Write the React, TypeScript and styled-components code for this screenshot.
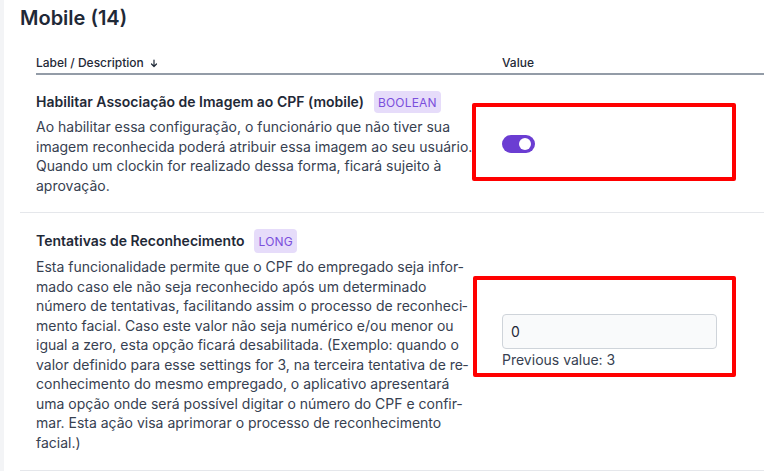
import React from "react";
import styled, { createGlobalStyle } from "styled-components";

const Global = createGlobalStyle`
  html, body { margin: 0; padding: 0; }
  body {
    background: #f3f4f6;
    font-family: Inter, "Noto Sans", sans-serif;
    color: #1f2937;
    overflow: hidden;
  }
`;

const Panel = styled.main`
  margin-left: 4px;
  background: #ffffff;
  min-height: 471px;
  padding: 6px 0 0 16px;
  box-sizing: border-box;
`;

const Title = styled.h2`
  margin: 0;
  font-size: 20px;
  line-height: 24px;
  font-weight: 600;
  color: #1f2937;
`;

const Table = styled.div`
  margin-top: 25px;
  width: 760px;
`;

const HeaderRow = styled.div`
  display: grid;
  grid-template-columns: 452px 1fr;
  margin-left: 16px;
  border-bottom: 2px solid #939ca7;
  padding-bottom: 2px;
`;

const HeaderCell = styled.div<{ $pad?: number }>`
  display: flex;
  align-items: center;
  gap: 6px;
  padding-left: ${(p) => p.$pad ?? 0}px;
  font-size: 12px;
  line-height: 16px;
  font-weight: 500;
  color: #1f2937;
`;

const Row = styled.div`
  display: grid;
  grid-template-columns: 452px 1fr;
  border-bottom: 1px solid #e5e7eb;
`;

const LabelCell = styled.div<{ $top: number; $bottom: number }>`
  padding: ${(p) => p.$top}px 0 ${(p) => p.$bottom}px 16px;
`;

const LabelLine = styled.div`
  display: flex;
  align-items: center;
  gap: 10px;
`;

const LabelText = styled.span`
  font-size: 14px;
  line-height: 22px;
  font-weight: 600;
  color: #1f2937;
`;

const Badge = styled.span<{ $h: number }>`
  display: inline-flex;
  align-items: center;
  height: ${(p) => p.$h}px;
  padding: 0 4px;
  border-radius: 4px;
  background: #e6dcfa;
  color: #7b4fdc;
  font-size: 12px;
  font-weight: 400;
  letter-spacing: 0.2px;
`;

const Description = styled.p`
  width: 440px;
  margin: 4px 0 0 0;
  font-size: 14px;
  line-height: 19.5px;
  color: #374151;
  hyphens: manual;
`;

const ValueCell = styled.div`
  display: flex;
  align-items: center;
  padding-left: 30px;
`;

const ValueContent = styled.div`
  position: relative;
  display: flex;
  flex-direction: column;
`;

const RedMark = styled.div<{ $x: number; $y: number; $w: number; $h: number }>`
  position: absolute;
  left: ${(p) => p.$x}px;
  top: ${(p) => p.$y}px;
  width: ${(p) => p.$w}px;
  height: ${(p) => p.$h}px;
  box-sizing: border-box;
  border: 4px solid #ff0000;
  border-radius: 2px;
  pointer-events: none;
`;

const Toggle = styled.span`
  position: relative;
  display: inline-block;
  width: 33px;
  height: 18px;
  border-radius: 9px;
  background: #6b3dd2;
  &::after {
    content: "";
    position: absolute;
    top: 3px;
    right: 4px;
    width: 12px;
    height: 12px;
    border-radius: 50%;
    background: #ffffff;
  }
`;

const Input = styled.input`
  box-sizing: border-box;
  width: 215px;
  height: 35px;
  margin: 0;
  padding: 0 8px;
  border: 1px solid #cfd4da;
  border-radius: 4px;
  background: #f9fafb;
  font-family: Inter, "Noto Sans", sans-serif;
  font-size: 14px;
  color: #1f2937;
  outline: none;
`;

const Hint = styled.div`
  margin-top: 1px;
  font-size: 14px;
  line-height: 20px;
  color: #374151;
`;

const SortArrow = () => (
  <svg width="8" height="9" viewBox="0 0 8 9" aria-hidden="true">
    <path d="M4 1v6.5M1.5 5L4 7.5 6.5 5" fill="none" stroke="#1f2937" strokeWidth="1.2" strokeLinecap="round" strokeLinejoin="round" />
  </svg>
);

const S = "\u00AD";

export default function App() {
  return (
    <>
      <Global />
      <Panel>
        <Title>Mobile (14)</Title>
        <Table>
          <HeaderRow>
            <HeaderCell>
              Label / Description <SortArrow />
            </HeaderCell>
            <HeaderCell $pad={14}>Value</HeaderCell>
          </HeaderRow>
          <Row>
            <LabelCell $top={16} $bottom={17}>
              <LabelLine>
                <LabelText>Habilitar Associação de Imagem ao CPF (mobile)</LabelText>
                <Badge $h={22}>BOOLEAN</Badge>
              </LabelLine>
              <Description>
                Ao habilitar essa configuração, o funcionário que não tiver sua imagem reconhecida poderá atribuir essa imagem ao seu usuário. Quando um clockin for realizado dessa forma, ficará sujeito à aprovação.
              </Description>
            </LabelCell>
            <ValueCell>
              <ValueContent>
                <Toggle />
                <RedMark $x={-30} $y={-32} $w={264} $h={78} />
              </ValueContent>
            </ValueCell>
          </Row>
          <Row>
            <LabelCell $top={16} $bottom={18}>
              <LabelLine>
                <LabelText>Tentativas de Reconhecimento</LabelText>
                <Badge $h={24}>LONG</Badge>
              </LabelLine>
              <Description>
                {`Esta funcionalidade permite que o CPF do empregado seja infor${S}mado caso ele não seja reconhecido após um determinado número de tentativas, facilitando assim o processo de reconheci${S}mento facial. Caso este valor não seja numérico e/ou menor ou igual a zero, esta opção ficará desabilitada. (Exemplo: quando o valor definido para esse settings for 3, na terceira tentativa de re${S}conhecimento do mesmo empregado, o aplicativo apresentará uma opção onde será possível digitar o número do CPF e confir${S}mar. Esta ação visa aprimorar o processo de reconhecimento facial.)`}
              </Description>
            </LabelCell>
            <ValueCell>
              <ValueContent>
                <Input defaultValue="0" />
                <Hint>Previous value: 3</Hint>
                <RedMark $x={-29} $y={-38} $w={263} $h={101} />
              </ValueContent>
            </ValueCell>
          </Row>
        </Table>
      </Panel>
    </>
  );
}
